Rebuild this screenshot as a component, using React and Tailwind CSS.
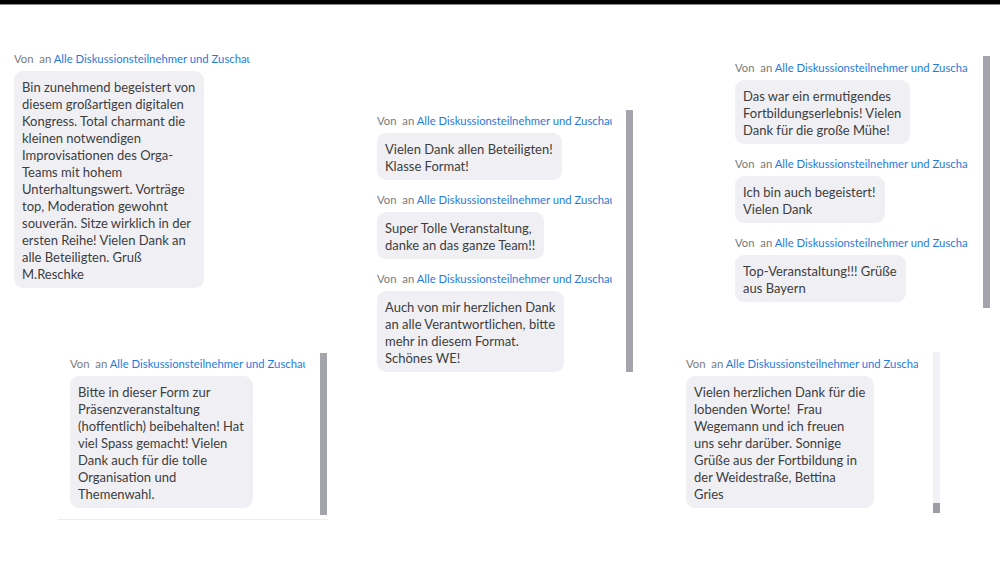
import React from 'react';

const panels = [
    {
        id: 'p1',
        pos: 'left-[14px] top-[47px] w-[236px]',
        clip: 'pr-0',
        scrollbar: null,
        messages: [
            [
                'Bin zunehmend begeistert von',
                'diesem großartigen digitalen',
                'Kongress. Total charmant die',
                'kleinen notwendigen',
                'Improvisationen des Orga-',
                'Teams mit hohem',
                'Unterhaltungswert. Vorträge',
                'top, Moderation gewohnt',
                'souverän. Sitze wirklich in der',
                'ersten Reihe! Vielen Dank an',
                'alle Beteiligten. Gruß',
                'M.Reschke',
            ],
        ],
    },
    {
        id: 'p2',
        pos: 'left-[377px] top-[105px] w-[256px] pt-[4px]',
        clip: 'pr-[21px]',
        scrollbar: 'thumb',
        barHeight: 'h-[262px]',
        messages: [
            ['Vielen Dank allen Beteiligten!', 'Klasse Format!'],
            ['Super Tolle Veranstaltung,', 'danke an das ganze Team!!'],
            [
                'Auch von mir herzlichen Dank',
                'an alle Verantwortlichen, bitte',
                'mehr in diesem Format.',
                'Schönes WE!',
            ],
        ],
    },
    {
        id: 'p3',
        pos: 'left-[735px] top-[51px] w-[255px] pt-[5px]',
        clip: 'pr-[22px]',
        scrollbar: 'thumb',
        barHeight: 'h-[252px]',
        messages: [
            ['Das war ein ermutigendes', 'Fortbildungserlebnis! Vielen', 'Dank für die große Mühe!'],
            ['Ich bin auch begeistert!', 'Vielen Dank'],
            ['Top-Veranstaltung!!! Grüße', 'aus Bayern'],
        ],
    },
    {
        id: 'p4',
        pos: 'left-[70px] top-[348px] w-[257px] pt-[4px]',
        clip: 'pr-[22px]',
        scrollbar: 'thumb',
        barHeight: 'h-[162px]',
        messages: [
            [
                'Bitte in dieser Form zur',
                'Präsenzveranstaltung',
                '(hoffentlich) beibehalten! Hat',
                'viel Spass gemacht! Vielen',
                'Dank auch für die tolle',
                'Organisation und',
                'Themenwahl.',
            ],
        ],
    },
    {
        id: 'p5',
        pos: 'left-[686px] top-[347px] w-[254px] pt-[5px]',
        clip: 'pr-[22px]',
        scrollbar: 'track',
        barHeight: 'h-[161px]',
        messages: [
            [
                'Vielen herzlichen Dank für die',
                'lobenden Worte!  Frau',
                'Wegemann und ich freuen',
                'uns sehr darüber. Sonnige',
                'Grüße aus der Fortbildung in',
                'der Weidestraße, Bettina',
                'Gries',
            ],
        ],
    },
];

const ChatHeader = () => (
    <div className="h-[14px] leading-[14px] text-[11.3px] whitespace-nowrap overflow-hidden">
        <span className="text-[#7a7a7a]">Von&nbsp;&nbsp;an </span>
        <span className="text-[#1f7ae0]">Alle Diskussionsteilnehmer und Zuschauer</span>
    </div>
);

const ChatBubble = ({ lines }) => (
    <div className="mt-[5px] w-fit bg-[#f0f0f4] rounded-[9px] pl-[8px] pr-[9px] pt-[8px] pb-[5px] text-[13px] leading-[17px] text-[#3d3d3d] whitespace-pre">
        {lines.map((line, i) => (
            <div key={i}>{line}</div>
        ))}
    </div>
);

const Scrollbar = ({ type, height }) => {
    if (type === 'track') {
        return (
            <div className={`${height} w-[7px] shrink-0 bg-[#f2f2f6] flex flex-col justify-end`}>
                <div className="h-[10px] w-full bg-[#9c9ca4]"></div>
            </div>
        );
    }
    return <div className={`${height} w-[7px] shrink-0 bg-[#a4a4ac]`}></div>;
};

const ChatPanel = ({ panel }) => (
    <div className={`absolute ${panel.pos} flex justify-between items-start`}>
        <div className={`flex-1 min-w-0 overflow-hidden flex flex-col gap-[13px] ${panel.clip}`}>
            {panel.messages.map((lines, i) => (
                <div key={i}>
                    <ChatHeader />
                    <ChatBubble lines={lines} />
                </div>
            ))}
        </div>
        {panel.scrollbar && (
            <div className="absolute right-0 top-0">
                <Scrollbar type={panel.scrollbar} height={panel.barHeight} />
            </div>
        )}
    </div>
);

const App = () => {
    return (
        <div
            className="w-[1000px] h-[563px] bg-white overflow-hidden flex flex-col"
            style={{ fontFamily: 'Lato, "Open Sans", sans-serif' }}
        >
            <div className="h-[5px] bg-black border-b border-[#8a8a8a] shrink-0"></div>
            <div className="relative flex-1">
                {panels.map((panel) => (
                    <ChatPanel key={panel.id} panel={panel} />
                ))}
                <div className="absolute left-[58px] top-[514px] w-[270px] border-b border-[#eeeeee]"></div>
            </div>
        </div>
    );
}

export default App;
